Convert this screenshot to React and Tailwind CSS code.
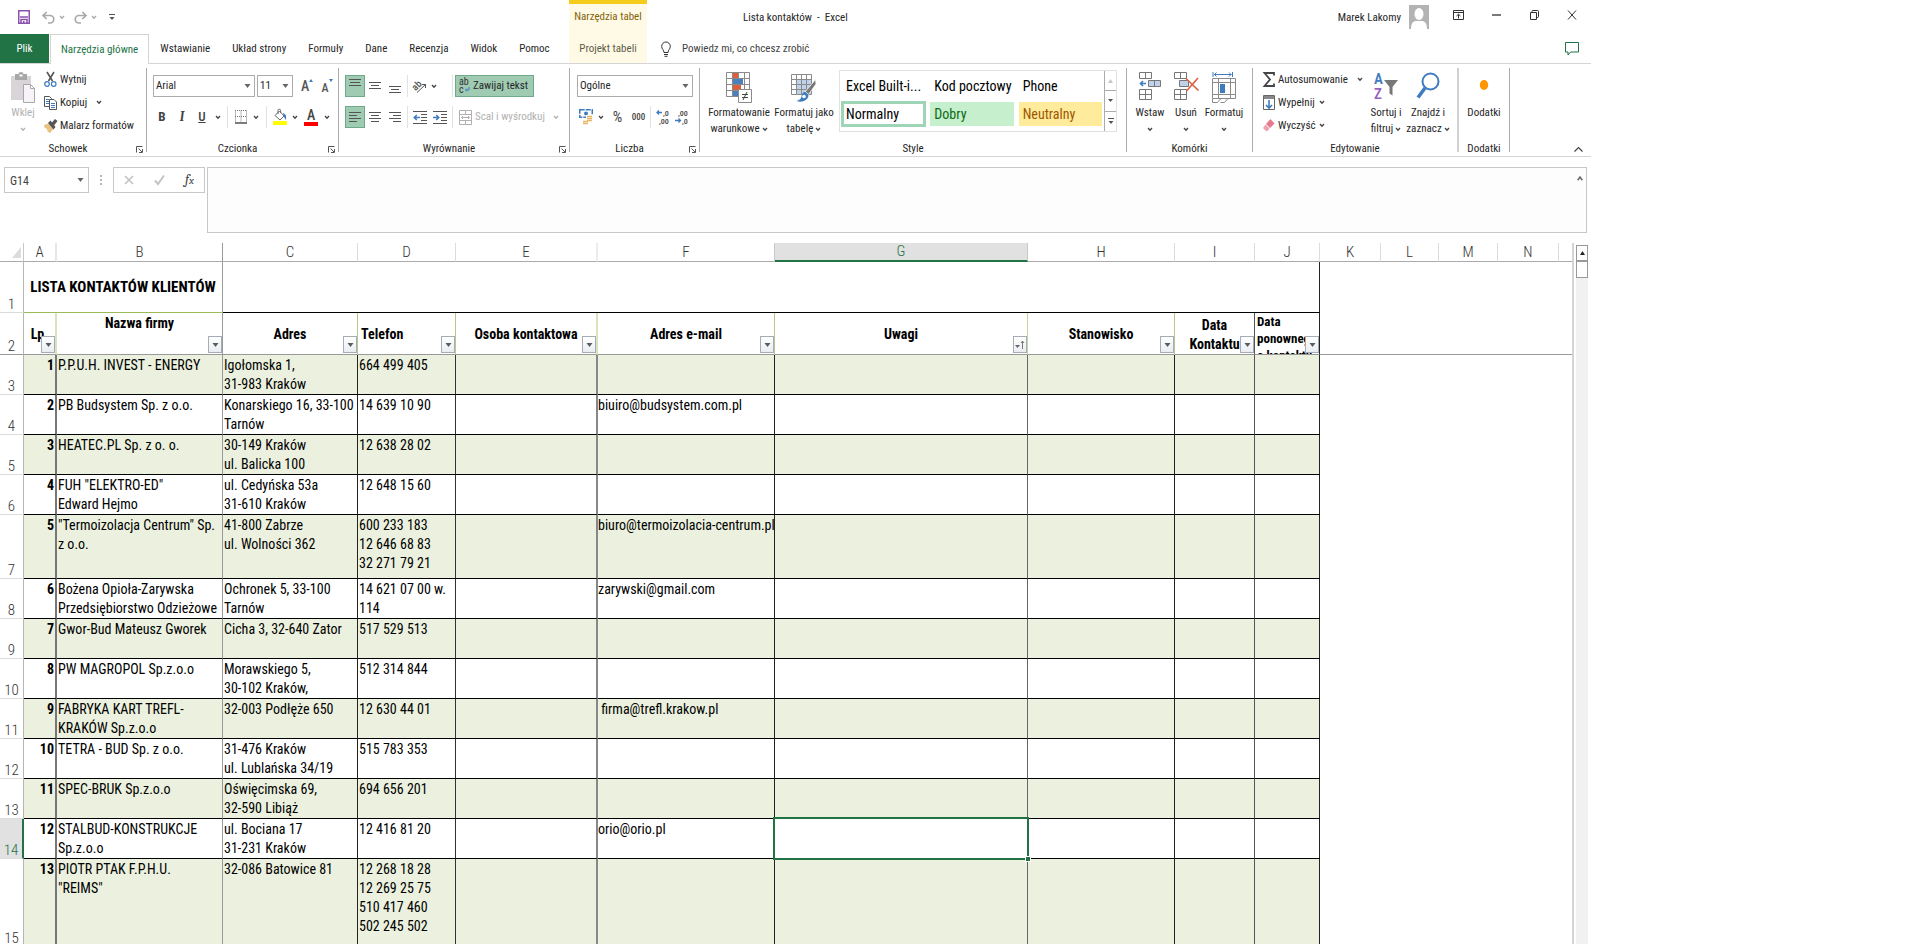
const UI = 'font-["Roboto_Condensed","Roboto","Noto_Sans",sans-serif]';

/* ---------- small shared pieces ---------- */

function Icon({ w, h, children, className = "" }) {
  return (
    <svg width={w} height={h} viewBox={`0 0 ${w} ${h}`} fill="none" className={`shrink-0 overflow-visible ${className}`} aria-hidden="true">
      {children}
    </svg>
  );
}

function Chevron({ color = "#444" }) {
  return (
    <Icon w={6} h={5}>
      <path d="M1 1l2 2.2L5 1" stroke={color} strokeWidth="1.3" />
    </Icon>
  );
}

function Caret({ color = "#666" }) {
  return (
    <Icon w={7} h={4}>
      <path d="M.5 0h6L3.500 4z" fill={color} />
    </Icon>
  );
}

function IconButton({ label, className = "w-5", children }) {
  return (
    <button type="button" aria-label={label} className={`flex h-[22px] shrink-0 items-center justify-center ${className}`}>
      {children}
    </button>
  );
}

function Separator({ className = "mx-1" }) {
  return <span className={`h-[22px] w-px shrink-0 bg-[#e1e1e1] ${className}`} />;
}

function Group({ label, launcher, className = "", children, edge = "w-px bg-[#ababab]" }) {
  return (
    <>
      <section aria-label={label} className={`flex shrink-0 flex-col ${className}`}>
        {children}
        <div className="mt-auto flex h-[14px] items-center leading-[14px]">
          <span className="flex-1 text-center">{label}</span>
          {launcher && (
            <button type="button" aria-label={`${label}: więcej opcji`} className="pr-[3px]">
              <Icon w={7} h={7}>
                <path d="M.5 6.500V.5h6M2.500 2.500l3.500 3.500M6.500 3v3.500H3" stroke="#555" />
              </Icon>
            </button>
          )}
        </div>
      </section>
      <div className={`my-1 shrink-0 ${edge}`} />
    </>
  );
}

function BigButton({ icon, lines, chevron = "inline", className, muted }) {
  return (
    <button type="button" className={`flex shrink-0 flex-col items-center pt-2 leading-4 ${muted ? "text-[#b1b1b1]" : ""} ${className}`}>
      <span className="mb-px flex h-8 items-start justify-center">{icon}</span>
      {lines.map((line, i) => (
        <span key={line} className="flex items-center gap-[2px] whitespace-nowrap">
          {line}
          {chevron === "inline" && i === lines.length - 1 && <Chevron />}
        </span>
      ))}
      {chevron === "below" && (
        <span className="flex h-4 items-center">
          <Chevron color={muted ? "#b1b1b1" : "#444"} />
        </span>
      )}
    </button>
  );
}

function SmallButton({ icon, label, chevron, gap = "gap-1" }) {
  return (
    <button type="button" className="flex h-[23px] items-center gap-[3px] whitespace-nowrap">
      <span className="flex w-[13px] justify-center">{icon}</span>
      <span className={`flex items-center ${gap}`}>
        {label}
        {chevron && <Chevron />}
      </span>
    </button>
  );
}

function SelectBox({ label, value, className }) {
  return (
    <span className={`relative flex h-[22px] shrink-0 items-center border border-[#ababab] ${className}`}>
      <select aria-label={label} defaultValue={value} className="h-full w-full appearance-none bg-white pl-[2px] outline-none">
        <option>{value}</option>
      </select>
      <span className="pointer-events-none absolute right-[3px]">
        <Caret />
      </span>
    </span>
  );
}

/* Horizontal strokes given as [x1, x2] pairs, one every three pixels */
function Lines({ rows, w = 14, h = 14, y = 1, color = "#555" }) {
  return (
    <Icon w={w} h={h}>
      {rows.map(([a, b], i) => (
        <path key={i} d={`M${a} ${y + 0.5 + i * 3}H${b}`} stroke={color} />
      ))}
    </Icon>
  );
}

/* ---------- title bar and tabs ---------- */

function TitleBar() {
  return (
    <header className="flex h-[34px] shrink-0 items-stretch">
      <div className="flex w-[569px] shrink-0 items-center pl-[18px]">
        <button type="button" aria-label="Zapisz">
          <Icon w={12} h={14}>
            <path d="M.75.75h10.500v12.500H.75z" stroke="#8b52ac" strokeWidth="1.500" />
            <path d="M2 7h8M3 13V9.500h6V13" stroke="#8b52ac" strokeWidth="1.500" />
            <path d="M5 11h1.500v2H5z" fill="#8b52ac" />
          </Icon>
        </button>
        <button type="button" aria-label="Cofnij" className="ml-3 flex items-center gap-1">
          <Icon w={13} h={13}>
            <path d="M1 4.500h7a3.700 3.700 0 0 1 0 7.500H6M4.700 1L1 4.500 4.700 8" stroke="#a9a9a9" strokeWidth="1.700" />
          </Icon>
          <Chevron color="#a9a9a9" />
        </button>
        <button type="button" aria-label="Wykonaj ponownie" className="ml-[9px] flex items-center gap-1">
          <Icon w={13} h={13}>
            <path d="M12 4.500H5a3.700 3.700 0 0 0 0 7.500h2M8.300 1L12 4.500 8.300 8" stroke="#a9a9a9" strokeWidth="1.700" />
          </Icon>
          <Chevron color="#a9a9a9" />
        </button>
        <button type="button" aria-label="Dostosuj pasek narzędzi" className="ml-3">
          <Icon w={6} h={8}>
            <path d="M0 1.500h6" stroke="#555" />
            <path d="M.5 4h5L3 7z" fill="#555" />
          </Icon>
        </button>
      </div>
      <div className="flex w-[78px] shrink-0 items-center justify-center whitespace-nowrap border-t-4 border-[#f5cb1c] bg-[#fffae5] pb-[5px] text-[#83620a]">
        Narzędzia tabel
      </div>
      <h1 className="flex items-center whitespace-pre pl-24 pt-[2px]">Lista kontaktów  -  Excel</h1>
      <div className="ml-auto flex items-center">
        <span className="pt-[2px]">Marek Lakomy</span>
        <Icon w={20} h={24} className="ml-2 mr-[10px]">
          <path d="M0 0h20v24H0z" fill="#b3b3b3" />
          <ellipse cx="10" cy="9" rx="4.500" ry="6" fill="#fff" />
          <path d="M2 24c0-6 2.500-8 5-8h6c2.500 0 5 2 5 8z" fill="#fff" />
        </Icon>
        <button type="button" aria-label="Opcje wyświetlania Wstążki" className="flex h-full w-[38px] items-center justify-center pb-1">
          <Icon w={11} h={10}>
            <path d="M.5.5h10v9H.5zM.5 2.500h10M5.500 8.500v-4M3.500 6l2-1.800L7.500 6" stroke="#333" />
          </Icon>
        </button>
        <button type="button" aria-label="Minimalizuj" className="flex h-full w-[38px] items-center justify-center pb-1">
          <Icon w={9} h={2}>
            <path d="M0 1h9" stroke="#222" strokeWidth="1.200" />
          </Icon>
        </button>
        <button type="button" aria-label="Przywróć w dół" className="flex h-full w-[38px] items-center justify-center pb-1">
          <Icon w={9} h={10}>
            <path d="M.5 2.500h6v7h-6zM2 2V1.500Q2 .5 3 .5h4.500q1 0 1 1v5q0 1-1 1H7" stroke="#333" />
          </Icon>
        </button>
        <button type="button" aria-label="Zamknij" className="flex h-full w-[38px] items-center justify-center pb-1">
          <Icon w={10} h={10}>
            <path d="M1 .5l8 9M9 .5l-8 9" stroke="#333" />
          </Icon>
        </button>
      </div>
    </header>
  );
}

const TABS = ["Wstawianie", "Układ strony", "Formuły", "Dane", "Recenzja", "Widok", "Pomoc"];

function TabBar() {
  return (
    <nav className="flex h-[30px] shrink-0 items-stretch whitespace-nowrap">
      <div className="flex w-[569px] shrink-0 items-stretch">
        <button type="button" className="w-[49px] border-b border-[#d4d4d4] bg-[#217346] pt-px text-white">Plik</button>
        <span className="w-px border-b border-[#d4d4d4]" />
        <button type="button" className="border-x border-t border-[#d4d4d4] px-[10px] text-[#217346]">Narzędzia główne</button>
        {TABS.map((t) => (
          <button key={t} type="button" className="border-b border-[#d4d4d4] px-[11px] pt-px">{t}</button>
        ))}
        <span className="flex-1 border-b border-[#d4d4d4]" />
      </div>
      <button type="button" className="w-[78px] border-b border-[#d4d4d4] bg-[#fffae5] pt-px text-[#5d5d4a]">Projekt tabeli</button>
      <button type="button" className="flex flex-1 items-center gap-[11px] border-b border-[#d4d4d4] pl-[14px] pt-px text-[#444]">
        <Icon w={10} h={16}>
          <path d="M3 11.500c0-2.500-2.300-3.300-2.300-6.200a4.300 4.300 0 0 1 8.600 0c0 2.900-2.300 3.700-2.300 6.200zM3 13.500h4M3.500 15.300h3" stroke="#333" />
        </Icon>
        Powiedz mi, co chcesz zrobić
      </button>
      <button type="button" aria-label="Komentarze" className="border-b border-[#d4d4d4] px-3">
        <Icon w={14} h={14}>
          <path d="M.5.5h13v9.500H5.500L3 13v-3H.5z" stroke="#217346" />
        </Icon>
      </button>
    </nav>
  );
}

/* ---------- ribbon ---------- */

function Clipboard() {
  return (
    <Group label="Schowek" launcher className="w-[146px]">
      <div className="flex pl-1">
        <BigButton
          muted
          className="w-[38px]"
          chevron="below"
          lines={["Wklej"]}
          icon={
            <Icon w={24} h={31}>
              <path d="M0 4h20v24H0z" fill="#d8d4d8" />
              <path d="M4 2h3.500a2.500 2 0 0 1 5 0H16v6H4z" fill="#a8a8a8" />
              <path d="M8.500 2.500h3v2h-3z" fill="#fff" />
              <path d="M12.500 12.500h7l4 4v14h-11zM19.500 12.500v4h4" fill="#f8f3f8" stroke="#a8a8a8" />
            </Icon>
          }
        />
        <div className="flex flex-col pl-[2px] pt-1">
          <SmallButton
            label="Wytnij"
            icon={
              <Icon w={13} h={15}>
                <path d="M3 0l5.500 9M10 0L4.500 9" stroke="#555" strokeWidth="1.600" />
                <ellipse cx="3" cy="12" rx="2.300" ry="2.400" stroke="#3f7cbf" strokeWidth="1.200" />
                <ellipse cx="9.700" cy="12" rx="2.300" ry="2.400" stroke="#3f7cbf" strokeWidth="1.200" />
              </Icon>
            }
          />
          <SmallButton
            label="Kopiuj"
            chevron
            gap="gap-[9px]"
            icon={
              <Icon w={13} h={14}>
                <path d="M.5.5h5l2 2v8h-7z" fill="#fff" stroke="#555" />
                <path d="M2 3.500h3M2 5.500h3M2 7.500h3" stroke="#3f7cbf" />
                <path d="M5.500 3.500h4.500l2.500 2.500v7.500h-7z" fill="#fff" stroke="#555" />
                <path d="M7 7.500h4M7 9.500h4M7 11.500h4" stroke="#3f7cbf" />
              </Icon>
            }
          />
          <SmallButton
            label="Malarz formatów"
            icon={
              <Icon w={13} h={14}>
                <path d="M0 6l4.500-1.500 5 5.500-3.500 4-2.500-1.500L3 10 .5 8.500z" fill="#eac282" />
                <path d="M4 4L6.500 1.500 11.500 8 9.500 10.500z" fill="#555" />
                <path d="M7.500 4L11 0l2.500 2L10 6.500z" fill="#555" />
              </Icon>
            }
          />
        </div>
      </div>
    </Group>
  );
}

function FontGroup() {
  return (
    <Group label="Czcionka" launcher className="w-[191px]">
      <div className="flex flex-col gap-[9px] pl-[5px] pt-[11px]">
        <div className="flex items-center pl-px">
          <SelectBox label="Czcionka" value="Arial" className="w-[102px]" />
          <SelectBox label="Rozmiar czcionki" value="11" className="ml-[2px] w-9" />
          <IconButton label="Zwiększ rozmiar czcionki" className="ml-1 w-5">
            <span className="text-[14px] font-medium text-[#555]">A</span>
            <Icon w={4} h={14}><path d="M0 3h4L2 0z" fill="#3f7cbf" /></Icon>
          </IconButton>
          <IconButton label="Zmniejsz rozmiar czcionki">
            <span className="pt-1 text-[12px] font-medium text-[#555]">A</span>
            <Icon w={4} h={14}><path d="M0 0h4L2 3z" fill="#3f7cbf" /></Icon>
          </IconButton>
        </div>
        <div className="flex items-center text-[13px] text-[#444]">
          <IconButton label="Pogrubienie"><b>B</b></IconButton>
          <IconButton label="Kursywa"><i className="font-serif font-bold">I</i></IconButton>
          <IconButton label="Podkreślenie"><span className="font-medium underline">U</span></IconButton>
          <IconButton label="Rodzaj podkreślenia" className="w-[11px]"><Chevron /></IconButton>
          <Separator />
          <IconButton label="Obramowania" className="w-[18px]">
            <Icon w={12} h={14}>
              <path d="M.5 .5v12M6 .5v12M11.500 .5v12M0 .5h12M0 6.500h12" stroke="#777" strokeDasharray="1 1" />
              <path d="M0 13h12" stroke="#444" strokeWidth="1.400" />
            </Icon>
          </IconButton>
          <IconButton label="Rodzaj obramowania" className="w-3"><Chevron /></IconButton>
          <Separator />
          <IconButton label="Kolor wypełnienia" className="w-[18px]">
            <Icon w={14} h={16}>
              <path d="M6.500 2l4.500 5-4 4L2 6.500z" stroke="#666" fill="#fff" />
              <path d="M5 5V1.500a1.300 1.300 0 0 1 2.600 0V4" stroke="#666" />
              <path d="M10 4c3 1 3.500 3.500 3 7l-2-3z" fill="#3f7cbf" />
              <path d="M0 12h14v4H0z" fill="#ffff00" />
            </Icon>
          </IconButton>
          <IconButton label="Wybór koloru wypełnienia" className="w-[11px]"><Chevron /></IconButton>
          <IconButton label="Kolor czcionki" className="w-[22px]">
            <span className="border-b-4 border-[#ff0000] px-[3px] text-[14px] font-medium leading-[13px]">A</span>
          </IconButton>
          <IconButton label="Wybór koloru czcionki" className="w-[10px]"><Chevron /></IconButton>
        </div>
      </div>
    </Group>
  );
}

function MergeGlyph({ color = "#b1b1b1" }) {
  return (
    <Icon w={13} h={15}>
      <path d="M.5.5h12v14H.5zM.5 4.500h12M.5 10.500h12M6.500.5v4M6.500 10.500v4M2.500 7.500h8M4 6L2.500 7.500 4 9M9 6l1.500 1.500L9 9" stroke={color} />
    </Icon>
  );
}

function IndentGlyph({ out }) {
  return (
    <Icon w={14} h={13}>
      <path d="M0 .5h14M8 3.500h6M8 6.500h6M8 9.500h6M0 12.500h14" stroke="#555" />
      <path d={out ? "M7 6.500H1.500M3.800 4L1.300 6.500 3.800 9" : "M0 6.500h5.500M3.200 4l2.500 2.500L3.200 9"} stroke="#3f7cbf" strokeWidth="1.600" />
    </Icon>
  );
}

const PRESSED = "border border-[#70a88a] bg-[#9fcbb3]";

function AlignmentGroup() {
  return (
    <Group label="Wyrównanie" launcher className="w-[230px]">
      <div className="flex flex-col gap-[9px] pl-[6px] pt-[11px]">
        <div className="flex items-center">
          <IconButton label="Wyrównaj do góry" className={`w-5 ${PRESSED}`}><Lines rows={[[1, 13], [2, 12], [1, 13]]} h={16} /></IconButton>
          <IconButton label="Wyrównaj do środka w pionie"><Lines rows={[[1, 13], [3, 11], [1, 13]]} h={10} /></IconButton>
          <IconButton label="Wyrównaj do dołu"><Lines rows={[[1, 13], [3, 11], [1, 13]]} h={15} y={7} /></IconButton>
          <Separator className="mx-[2px]" />
          <IconButton label="Orientacja">
            <Icon w={14} h={14}>
              <text x="0" y="10" fontSize="10" fontWeight="500" fill="#555" transform="rotate(-45 4 8)">ab</text>
              <path d="M4 13.500L12.500 5.500M9 5.500h3.500V9" stroke="#555" />
            </Icon>
          </IconButton>
          <IconButton label="Kąt orientacji" className="w-5 pr-3"><Chevron /></IconButton>
          <Separator className="mx-[2px]" />
          <button type="button" className={`flex h-[22px] items-center gap-[3px] whitespace-nowrap pl-[3px] pr-[5px] ${PRESSED}`}>
            <Icon w={11} h={16}>
              <text x="0" y="7" fontSize="10" fill="#333">ab</text>
              <text x="0" y="15" fontSize="10" fill="#333">c</text>
              <path d="M10 9v3H6.500M8 10.500L6.500 12 8 13.500" stroke="#3f7cbf" />
            </Icon>
            Zawijaj tekst
          </button>
        </div>
        <div className="flex items-center">
          <IconButton label="Wyrównaj do lewej" className={`w-5 ${PRESSED}`}><Lines rows={[[1, 13], [1, 9], [1, 13], [1, 9]]} h={12} /></IconButton>
          <IconButton label="Wyśrodkuj"><Lines rows={[[1, 13], [3, 11], [1, 13], [3, 11]]} h={12} /></IconButton>
          <IconButton label="Wyrównaj do prawej"><Lines rows={[[1, 13], [5, 13], [1, 13], [5, 13]]} h={12} /></IconButton>
          <Separator className="mx-[2px]" />
          <IconButton label="Zmniejsz wcięcie"><IndentGlyph out /></IconButton>
          <IconButton label="Zwiększ wcięcie"><IndentGlyph /></IconButton>
          <Separator className="mx-[2px]" />
          <button type="button" className="flex h-[22px] items-center gap-[3px] whitespace-nowrap pl-1 text-[#b1b1b1]">
            <MergeGlyph />
            Scal i wyśrodkuj
            <span className="pl-[5px]"><Chevron color="#b1b1b1" /></span>
          </button>
        </div>
      </div>
    </Group>
  );
}

function DecimalGlyph({ add }) {
  return (
    <Icon w={13} h={16}>
      <text x={add ? 7 : 3} y="7" fontSize="8" fontWeight="500" fill="#444">{add ? ",0" : ",00"}</text>
      <text x={add ? 3 : 7} y="15" fontSize="8" fontWeight="500" fill="#444">{add ? ",00" : ",0"}</text>
      <path d={add ? "M6 3.500H1M3 1.500l-2 2 2 2" : "M0 11.500h5M3.500 9.500l2 2-2 2"} stroke="#3f7cbf" strokeWidth="1.300" />
    </Icon>
  );
}

function NumberGroup() {
  return (
    <Group label="Liczba" launcher className="w-[129px]">
      <div className="flex flex-col gap-[9px] pl-[7px] pt-[11px]">
        <SelectBox label="Format liczb" value="Ogólne" className="w-[116px]" />
        <div className="flex items-center text-[#444]">
          <IconButton label="Format księgowy" className="w-[18px]">
            <Icon w={14} h={16}>
              <path d="M.75.75h12.500v7.500H.75z" stroke="#3f7cbf" strokeWidth="1.500" strokeDasharray="5 1" />
              <circle cx="7" cy="4.500" r="2" fill="#3f7cbf" />
              <path d="M7 6h7v7H7z" fill="#fff" />
              <path d="M8 7.500h5M8 9.500h5M8 11.500h5M4 12.500h5M4 14.500h5" stroke="#e9b665" strokeWidth="1.400" />
            </Icon>
          </IconButton>
          <IconButton label="Wybór waluty" className="w-[11px]"><Chevron /></IconButton>
          <IconButton label="Zapis procentowy" className="w-[23px] text-[15px]">%</IconButton>
          <IconButton label="Zapis dziesiętny" className="w-[19px] text-[9px] font-medium">000</IconButton>
          <Separator className="mx-[2px]" />
          <IconButton label="Zwiększ dziesiętne" className="w-[18px]"><DecimalGlyph add /></IconButton>
          <IconButton label="Zmniejsz dziesiętne"><DecimalGlyph /></IconButton>
        </div>
      </div>
    </Group>
  );
}

const STYLE_CELLS = [
  { name: "Excel Built-i...", cls: "text-black" },
  { name: "Kod pocztowy", cls: "text-black" },
  { name: "Phone", cls: "text-black" },
  { name: "Normalny", cls: "text-black outline-3 -outline-offset-2 outline-[#9fd5b7]" },
  { name: "Dobry", cls: "bg-[#c6efce] text-[#0b6b12]" },
  { name: "Neutralny", cls: "bg-[#ffeb9c] text-[#9c5700]" },
];

function StylesGroup() {
  return (
    <Group label="Style" className="w-[426px]">
      <div className="flex pl-[5px]">
        <BigButton
          className="w-[68px]"
          lines={["Formatowanie", "warunkowe"]}
          icon={
            <Icon w={26} h={31}>
              <path d="M.5.5h23v24H.5zM.5 6.500h23M.5 12.500h23M.5 18.500h23M6.500.5v24M12.500.5v24M18.500.5v24" stroke="#8a8a8a" fill="#fff" />
              <path d="M7 1h5v5H7zM7 13h8v5H7z" fill="#dc5f3c" />
              <path d="M7 7h10v5H7zM7 19h5v5H7z" fill="#4a80bd" />
              <path d="M12.500 17.500h13v13h-13z" stroke="#8a8a8a" fill="#fff" />
              <path d="M16 22.500h6M16 25.500h6M21 20l-4 8" stroke="#444" />
            </Icon>
          }
        />
        <BigButton
          className="w-[62px]"
          lines={["Formatuj jako", "tabelę"]}
          icon={
            <Icon w={26} h={32}>
              <path d="M.5 2.500h20v20H.5z" fill="#fff" stroke="#8a8a8a" />
              <path d="M6 8h14v14H6z" fill="#bfd2ea" />
              <path d="M.5 7.500h20M.5 12.500h20M.5 17.500h20M5.500 2.500v20M10.500 2.500v20M15.500 2.500v20" stroke="#8a8a8a" />
              <path d="M24.500 7.500l-10 12 3 3L25 12z" fill="#777" stroke="#fff" strokeWidth=".7" />
              <path d="M14.500 20c-3 0-3.500 2-4 4.500-.4 2-2 4-5 4.500 6 2 12-1 12-6z" fill="#3f7cbf" />
              <circle cx="13" cy="24.500" r="1.800" fill="#fff" />
            </Icon>
          }
        />
        <div className="ml-1 mt-[6px] flex h-[62px] w-[278px] border border-[#e1e1e1]">
          <div className="grid flex-1 grid-cols-3 grid-rows-2 gap-x-[5px] gap-y-1 px-[2px] pb-[5px] pt-[3px] text-[14px]">
            {STYLE_CELLS.map((s) => (
              <button key={s.name} type="button" className={`flex items-center whitespace-nowrap pl-1 ${s.cls}`}>{s.name}</button>
            ))}
          </div>
          <div className="flex w-3 flex-col divide-y divide-[#ababab] border-l border-[#ababab]">
            <button type="button" aria-label="Poprzednie style" className="flex flex-1 items-center justify-center">
              <Icon w={5} h={4}><path d="M0 4h5L2.500 0z" fill="#c6c6c6" /></Icon>
            </button>
            <button type="button" aria-label="Następne style" className="flex flex-1 items-center justify-center">
              <Icon w={5} h={3}><path d="M0 0h5L2.500 3z" fill="#555" /></Icon>
            </button>
            <button type="button" aria-label="Więcej stylów" className="flex flex-1 items-center justify-center">
              <Icon w={6} h={7}><path d="M0 0h6v1H0zM.5 3h5L3 6z" fill="#555" /></Icon>
            </button>
          </div>
        </div>
      </div>
    </Group>
  );
}

function CellsGroup() {
  return (
    <Group label="Komórki" className="w-[125px]">
      <div className="flex pl-[3px]">
        <BigButton
          className="w-10"
          chevron="below"
          lines={["Wstaw"]}
          icon={
            <Icon w={24} h={29}>
              <path d="M1.500.5h12v6h-12zM7.500.5v6M1.500 17.500h12v10h-12zM7.500 17.500v10M1.500 22.500h12" stroke="#777" />
              <path d="M10.500 8.500h12v6h-12z" fill="#bfd2ea" stroke="#777" />
              <path d="M16.500 8.500v6" stroke="#777" />
              <path d="M8 11.500H3M5 9l-2.500 2.500L5 14" stroke="#3f7cbf" strokeWidth="1.600" />
            </Icon>
          }
        />
        <BigButton
          className="w-8"
          chevron="below"
          lines={["Usuń"]}
          icon={
            <Icon w={25} h={29}>
              <path d="M.5.5h12v6H.5zM6.500.5v6M.5 17.500h12v10H.5zM6.500 17.500v10M.5 22.500h12" stroke="#777" />
              <path d="M5.500 8.500h9v6h-9z" fill="#bfd2ea" stroke="#777" />
              <path d="M12 6.500l12.500 12M24 6L12.500 19" stroke="#dc5f3c" strokeWidth="1.600" />
            </Icon>
          }
        />
        <BigButton
          className="w-11"
          chevron="below"
          lines={["Formatuj"]}
          icon={
            <Icon w={24} h={31}>
              <path d="M1 0v5M20.500 0v5M2 2.500h17.500M4.500 .5l-2 2 2 2M17 .5l2 2-2 2" stroke="#3f7cbf" />
              <path d="M.5 6.500h23v20H.5zM.5 10.500h23M.5 22.500h23M6.500 6.500v20M18.500 6.500v20" stroke="#8a8a8a" />
              <path d="M8 12h5v9H8z" fill="#3f7cbf" />
              <path d="M.5 27v3.500h5l3-3.500M8.500 30.500h4l3-3.500" stroke="#8a8a8a" />
            </Icon>
          }
        />
      </div>
    </Group>
  );
}

function EditingGroup() {
  return (
    <Group label="Edytowanie" className="w-[204px]" edge="w-[2px] bg-[#d0d0d0]">
      <div className="flex pl-[9px]">
        <div className="flex w-[105px] flex-col items-start pt-1">
          <SmallButton
            label="Autosumowanie"
            chevron
            gap="gap-[9px]"
            icon={<Icon w={12} h={15}><path d="M11 3.500V1H1.500L7 7.500 1.500 14H11v-2.500" stroke="#444" strokeWidth="1.800" /></Icon>}
          />
          <SmallButton
            label="Wypełnij"
            chevron
            icon={
              <Icon w={12} h={15}>
                <path d="M.5.5h11v14H.5z" stroke="#666" fill="#fff" />
                <path d="M1 1h10v3H1z" fill="#888" />
                <path d="M6 5v8M3 10l3 3 3-3" stroke="#3f7cbf" strokeWidth="1.600" />
              </Icon>
            }
          />
          <SmallButton
            label="Wyczyść"
            chevron
            icon={
              <Icon w={12} h={13}>
                <path d="M7.500 0L11.500 4.500 7 9 3 5z" fill="#e8788c" />
                <path d="M2.500 5.500l4 4L4.500 12H3L0 9z" fill="#f0a0ae" />
              </Icon>
            }
          />
        </div>
        <BigButton
          className="w-[38px]"
          lines={["Sortuj i", "filtruj"]}
          icon={
            <Icon w={25} h={31}>
              <text x="0" y="12" fontSize="15" fontWeight="600" fill="#3f7cbf">A</text>
              <text x="0" y="27" fontSize="15" fontWeight="600" fill="#9a5fc0">Z</text>
              <path d="M10 8h14l-5.500 7v8.500l-3-2V15z" fill="#777" />
            </Icon>
          }
        />
        <BigButton
          className="w-[46px]"
          lines={["Znajdź i", "zaznacz"]}
          icon={
            <Icon w={24} h={28}>
              <circle cx="14.500" cy="9.500" r="8" stroke="#3f7cbf" strokeWidth="2" />
              <path d="M9 16L2 25.500" stroke="#3f7cbf" strokeWidth="3.500" />
            </Icon>
          }
        />
      </div>
    </Group>
  );
}

function Ribbon() {
  return (
    <div className="flex h-[93px] shrink-0 items-stretch border-b border-[#d4d4d4]">
      <Clipboard />
      <FontGroup />
      <AlignmentGroup />
      <NumberGroup />
      <StylesGroup />
      <CellsGroup />
      <EditingGroup />
      <Group label="Dodatki" className="w-[50px]">
        <BigButton
          className="w-full"
          chevron="none"
          lines={["Dodatki"]}
          icon={<Icon w={10} h={24}><ellipse cx="5" cy="13" rx="4.200" ry="5" fill="#ff9500" /></Icon>}
        />
      </Group>
      <button type="button" aria-label="Zwiń Wstążkę" className="mb-1 ml-auto mr-2 self-end">
        <Icon w={9} h={5}><path d="M.5 4.500l4-4 4 4" stroke="#444" strokeWidth="1.200" /></Icon>
      </button>
    </div>
  );
}

/* ---------- formula bar ---------- */

function FormulaBar() {
  return (
    <div className="mt-[10px] flex h-[66px] shrink-0 items-start pl-1 pr-1">
      <div className="flex h-[26px] w-[85px] shrink-0 items-center border border-[#c8c8c8] bg-white pr-1">
        <input aria-label="Pole nazwy" defaultValue="G14" className="w-full min-w-0 flex-1 pl-[5px] pt-px text-[12px] text-[#444] outline-none" />
        <Caret />
      </div>
      <Icon w={2} h={26} className="mx-[11px]">
        <path d="M0 8h2v2H0zM0 12h2v2H0zM0 16h2v2H0z" fill="#b5b5b5" />
      </Icon>
      <div className="flex h-[26px] w-[92px] shrink-0 items-center justify-between border border-[#c8c8c8] bg-white px-[10px]">
        <button type="button" aria-label="Anuluj">
          <Icon w={10} h={10}><path d="M1 1l8 8M9 1L1 9" stroke="#c4c4c4" strokeWidth="1.700" /></Icon>
        </button>
        <button type="button" aria-label="Wpis">
          <Icon w={11} h={10}><path d="M1 5.500L4 9l6-8.500" stroke="#c4c4c4" strokeWidth="2" /></Icon>
        </button>
        <button type="button" aria-label="Wstaw funkcję" className="font-serif text-[14px] italic leading-5 text-[#444]">
          f<span className="text-[11px]">x</span>
        </button>
      </div>
      <div className="ml-[2px] flex h-full flex-1 items-start border border-[#c8c8c8] bg-[#fdfdfd]">
        <textarea aria-label="Pasek formuły" className="h-full flex-1 resize-none bg-transparent px-1 outline-none" />
        <button type="button" aria-label="Zwiń pasek formuły" className="mr-[3px] mt-2">
          <Icon w={6} h={5}><path d="M.7 4.300L3 1l2.300 3.300" stroke="#666" strokeWidth="1.500" /></Icon>
        </button>
      </div>
    </div>
  );
}

/* ---------- sheet ---------- */

const COLUMNS = [
  { id: "A", col: "w-[33px]", edge: "border-r-2 border-r-[#e6e6e6]" },
  { id: "B", col: "w-[166px]", edge: "border-r border-r-[#999999]" },
  { id: "C", col: "w-[135px]", edge: "border-r border-r-[#dcdcdc]" },
  { id: "D", col: "w-[98px]", edge: "border-r border-r-[#dcdcdc]" },
  { id: "E", col: "w-[142px]", edge: "border-r-2 border-r-[#ececec]" },
  { id: "F", col: "w-[177px]", edge: "border-r border-r-[#c8c8c8]" },
  { id: "G", col: "w-[253px]", edge: "border-r border-r-[#c8c8c8]" },
  { id: "H", col: "w-[147px]", edge: "border-r border-r-[#dcdcdc]" },
  { id: "I", col: "w-[80px]", edge: "border-r border-r-[#dcdcdc]" },
  { id: "J", col: "w-[65px]", edge: "border-r border-r-[#dcdcdc]" },
  { id: "K", col: "w-[61px]", edge: "border-r border-r-[#dcdcdc]" },
  { id: "L", col: "w-[58px]", edge: "border-r border-r-[#dcdcdc]" },
  { id: "M", col: "w-[59px]", edge: "border-r border-r-[#dcdcdc]" },
  { id: "N", col: "w-[61px]", edge: "border-r border-r-[#dcdcdc]" },
];

const HEADINGS = [
  { text: "Lp.", edge: "border-r-2 border-r-[#d8e4bc]", cls: "pt-[2px] text-center" },
  { text: "Nazwa firmy", edge: "border-r border-r-[#999999]", cls: "pt-px text-center align-top" },
  { text: "Adres", edge: "border-r border-r-[#b5cb85]", cls: "pt-[2px] text-center" },
  { text: "Telefon", edge: "border-r border-r-[#b5cb85]", cls: "pl-[3px] pt-[2px] text-left" },
  { text: "Osoba kontaktowa", edge: "border-r-2 border-r-[#d8e4bc]", cls: "pt-[2px] text-center" },
  { text: "Adres e-mail", edge: "border-r border-r-[#b5cb85]", cls: "pt-[2px] text-center" },
  { text: "Uwagi", edge: "border-r border-r-[#c4d79b]", cls: "pt-[2px] text-center", sorted: true },
  { text: "Stanowisko", edge: "border-r border-r-[#b5cb85]", cls: "pt-[2px] text-center" },
  { text: "Data\nKontaktu", edge: "border-r border-r-[#555555]", cls: "pt-[2px] text-center" },
  { text: "Data\nponowneg\no kontaktu", edge: "border-r border-r-[#222222]", cls: "pl-[2px] text-left align-top text-[13px] leading-[17px]" },
];

const CELL_EDGES = [
  "border-r-2 border-r-[#777777] pr-px text-right font-bold",
  "border-r border-r-[#999999] pl-px",
  "border-r border-r-[#222222] pl-px",
  "border-r border-r-[#333333] pl-px",
  "border-r-2 border-r-[#888888] pl-px",
  "border-r border-r-[#222222]",
  "border-r border-r-[#666666] pl-px",
  "border-r border-r-[#222222] pl-px",
  "border-r border-r-[#555555] pl-px",
  "border-r border-r-[#222222] pl-px",
];

const ROWS = [
  ["P.P.U.H. INVEST - ENERGY", "Igołomska 1,\n31-983 Kraków", "664 499 405", ""],
  ["PB Budsystem Sp. z o.o.", "Konarskiego 16, 33-100\nTarnów", "14 639 10 90", "biuiro@budsystem.com.pl"],
  ["HEATEC.PL Sp. z o. o.", "30-149 Kraków\nul. Balicka 100", "12 638 28 02", ""],
  ["FUH \"ELEKTRO-ED\"\nEdward Hejmo", "ul. Cedyńska 53a\n31-610 Kraków", "12 648 15 60", ""],
  ["\"Termoizolacja Centrum\" Sp.\nz o.o.", "41-800 Zabrze\nul. Wolności 362", "600 233 183\n12 646 68 83\n32 271 79 21", "biuro@termoizolacia-centrum.pl"],
  ["Bożena Opioła-Zarywska\nPrzedsiębiorstwo Odzieżowe", "Ochronek 5, 33-100\nTarnów", "14 621 07 00 w.\n114", "zarywski@gmail.com"],
  ["Gwor-Bud Mateusz Gworek", "Cicha 3, 32-640 Zator", "517 529 513", ""],
  ["PW MAGROPOL Sp.z.o.o", "Morawskiego 5,\n30-102 Kraków,", "512 314 844", ""],
  ["FABRYKA KART TREFL-\nKRAKÓW Sp.z.o.o", "32-003 Podłęże 650", "12 630 44 01", " firma@trefl.krakow.pl"],
  ["TETRA - BUD Sp. z o.o.", "31-476 Kraków\nul. Lublańska 34/19", "515 783 353", ""],
  ["SPEC-BRUK Sp.z.o.o", "Oświęcimska 69,\n32-590 Libiąż", "694 656 201", ""],
  ["STALBUD-KONSTRUKCJE\nSp.z.o.o", "ul. Bociana 17\n31-231 Kraków", "12 416 81 20", "orio@orio.pl"],
  ["PIOTR PTAK F.P.H.U.\n\"REIMS\"", "32-086 Batowice 81", "12 268 18 28\n12 269 25 75\n510 417 460\n502 245 502", ""],
];

const SELECTED = { row: 14, col: "G" };

const ROW_HEIGHTS = { 7: "h-16", 15: "h-[88px]" };

function RowNumber({ n, edge = "border-b-[#dcdcdc]" }) {
  const active = n === SELECTED.row;
  return (
    <th
      scope="row"
      className={`border-b p-0 align-bottom text-[15px] font-light leading-[16px] ${edge} ${
        active ? "border-r-2 border-r-[#217346] bg-[#e1e1e1] text-[#217346]" : "border-r border-r-[#b5b5b5] text-[#333]"
      }`}
    >
      {n}
    </th>
  );
}

function FilterButton({ label, sorted }) {
  return (
    <button
      type="button"
      aria-label={`Filtruj: ${label}`}
      className="absolute bottom-px right-0 flex h-[17px] w-[14px] items-center justify-center border border-[#a5acb8] bg-linear-to-b from-white to-[#e9edf2]"
    >
      {sorted ? (
        <Icon w={10} h={10}>
          <path d="M0 5h5L2.500 8z" fill="#666" />
          <path d="M7.500 9V1M6 3l1.500-2L9 3" stroke="#777" />
        </Icon>
      ) : (
        <Icon w={7} h={4}><path d="M.5 0h6L3.500 4z" fill="#5b5b5b" /></Icon>
      )}
    </button>
  );
}

function Sheet() {
  return (
    <table className="w-full table-fixed border-separate border-spacing-0 self-start whitespace-pre border-r-2 border-r-[#d4d4d4] text-[14px] leading-[19px] text-black">
      <colgroup>
        <col className="w-6" />
        {COLUMNS.map((c) => <col key={c.id} className={c.col} />)}
        <col />
      </colgroup>
      <thead>
        <tr className="h-[19px] text-[15px] leading-[18px] text-[#333]">
          <th className="border-b border-r border-b-[#ababab] border-r-[#c8c8c8] p-0">
            <Icon w={9} h={11} className="ml-auto mr-[2px]"><path d="M9 0v11H0z" fill="#dcdcdc" /></Icon>
          </th>
          {COLUMNS.map((c) => (
            <th
              key={c.id}
              scope="col"
              className={`p-0 font-light ${c.edge} ${
                c.id === SELECTED.col ? "border-b-2 border-b-[#217346] bg-[#e1e1e1] leading-[17px] text-[#217346]" : "border-b border-b-[#ababab]"
              }`}
            >
              {c.id}
            </th>
          ))}
          <th className="border-b border-b-[#ababab]" />
        </tr>
      </thead>
      <tbody>
        <tr className="h-[51px]">
          <RowNumber n={1} />
          <th colSpan={2} className="border-b border-r border-b-[#9bbb59] border-r-[#999999] p-0 text-center text-[15px] font-bold">
            LISTA KONTAKTÓW KLIENTÓW
          </th>
          <td colSpan={8} className="border-b border-r border-b-black border-r-[#222222]" />
          <td colSpan={5} />
        </tr>
        <tr className="h-[42px]">
          <RowNumber n={2} edge="border-b-[#999999]" />
          {HEADINGS.map((h) => (
            <th key={h.text} scope="col" className={`relative border-b border-b-[#999999] p-0 font-bold ${h.edge} ${h.cls}`}>
              <div className="max-h-[41px] overflow-hidden">{h.text}</div>
              <FilterButton label={h.text} sorted={h.sorted} />
            </th>
          ))}
          <td colSpan={5} className="border-b border-b-[#999999]" />
        </tr>
        {ROWS.map(([name, address, phone, email], i) => {
          const n = i + 3;
          const values = [i + 1, name, address, phone, "", email, "", "", "", ""];
          return (
            <tr key={n} className={ROW_HEIGHTS[n] || "h-10"}>
              <RowNumber n={n} />
              {values.map((v, c) => {
                const selected = n === SELECTED.row && COLUMNS[c].id === SELECTED.col;
                return (
                  <td
                    key={c}
                    className={`border-b border-b-black py-0 pt-px align-top ${CELL_EDGES[c]} ${i % 2 === 0 ? "bg-[#ebf1de]" : ""} ${selected ? "relative" : ""}`}
                  >
                    {v}
                    {selected && (
                      <div className="absolute -bottom-[2px] -left-[2px] -right-[2px] -top-[2px] z-10 border-2 border-[#217346]">
                        <span className="absolute -bottom-1 -right-1 h-[6px] w-[6px] border border-white bg-[#217346]" />
                      </div>
                    )}
                  </td>
                );
              })}
              <td colSpan={5} />
            </tr>
          );
        })}
      </tbody>
    </table>
  );
}

function ScrollBar() {
  return (
    <div className="ml-[2px] mr-[3px] mt-[2px] flex w-3 shrink-0 flex-col self-stretch bg-[#f1f1f1]">
      <button type="button" aria-label="Przewiń w górę" className="flex h-4 items-center justify-center border border-[#999999] bg-white">
        <Icon w={5} h={4}><path d="M0 4h5L2.500 0z" fill="#222" /></Icon>
      </button>
      <div className="h-[17px] border border-[#999999] bg-white" />
    </div>
  );
}

export default function App() {
  return (
    <div className="flex h-screen overflow-hidden bg-white pr-[329px]">
      <main className={`flex min-w-0 flex-1 flex-col text-[11px] leading-[14px] text-[#262626] ${UI}`}>
        <TitleBar />
        <TabBar />
        <Ribbon />
        <FormulaBar />
        <div className="mt-[10px] flex min-h-0 flex-1 overflow-hidden">
          <Sheet />
          <ScrollBar />
        </div>
      </main>
    </div>
  );
}
